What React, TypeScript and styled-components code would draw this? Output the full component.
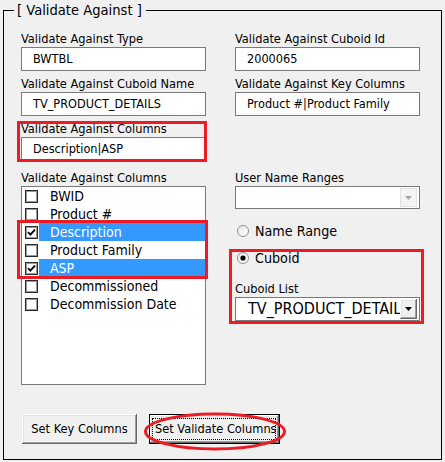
import React from 'react';
import styled, { createGlobalStyle } from 'styled-components';

const GlobalStyle = createGlobalStyle`
  html, body { margin: 0; padding: 0; background: #f0f0f0; }
  body {
    font-family: "DejaVu Sans Condensed", "DejaVu Sans", sans-serif;
    font-stretch: condensed;
    color: #000;
  }
`;

const Frame = styled.fieldset`
  box-sizing: border-box;
  width: 439px;
  height: 459px;
  margin: 1px 0 0 3px;
  padding: 0;
  border: 1px solid #000;
  min-width: 0;
`;

const Caption = styled.legend`
  margin-left: 10px;
  padding: 0 4px 0 3px;
  font-size: 14.6px;
  line-height: 18px;
`;

const Body = styled.div`
  padding: 7px 20px 0 17px;
`;

const Grid = styled.div<{ $gapTop?: number }>`
  display: grid;
  grid-template-columns: 185px 185px;
  column-gap: 29px;
  margin-top: ${(p) => p.$gapTop ?? 0}px;
  align-items: start;
`;

const Field = styled.div`
  position: relative;
  display: flex;
  flex-direction: column;
`;

const Label = styled.div<{ $top?: number }>`
  box-sizing: border-box;
  height: 21px;
  padding-top: 6px;
  margin-top: ${(p) => p.$top ?? 0}px;
  font-size: 12.7px;
  line-height: 14px;
  white-space: nowrap;
`;

const TextBox = styled.div`
  box-sizing: border-box;
  height: 24px;
  border: 1px solid #7a7a7a;
  background: #fff;
  padding-left: 11px;
  font-size: 12.6px;
  line-height: 22px;
  white-space: nowrap;
  overflow: hidden;
`;

const Mark = styled.span<{ $t: number; $l: number; $r: number; $b: number }>`
  position: absolute;
  top: ${(p) => p.$t}px;
  left: ${(p) => p.$l}px;
  right: ${(p) => p.$r}px;
  bottom: ${(p) => p.$b}px;
  border: 3px solid #ed1c24;
  pointer-events: none;
`;

const ListBox = styled.div`
  box-sizing: border-box;
  height: 199px;
  border: 1px solid #7a7a7a;
  background: #fff;
  display: flex;
  flex-direction: column;
`;

const ItemGroup = styled.div`
  position: relative;
  display: flex;
  flex-direction: column;
`;

const Item = styled.div`
  display: flex;
  align-items: center;
  height: 18px;
`;

const CheckBox = styled.span`
  box-sizing: border-box;
  width: 13px;
  height: 13px;
  margin-left: 3px;
  margin-right: 1px;
  border: 1px solid #2a2a2a;
  box-shadow: inset 0 0 0 1px #9a9a9a;
  background: #fff;
  display: flex;
  align-items: center;
  justify-content: center;
  flex: none;
`;

const ItemText = styled.span<{ $sel?: boolean }>`
  flex: 1;
  height: 18px;
  padding-left: 11px;
  font-size: 14px;
  line-height: 18px;
  white-space: nowrap;
  background: ${(p) => (p.$sel ? '#3399ff' : 'transparent')};
  color: ${(p) => (p.$sel ? '#fff' : '#000')};
`;

const Stack = styled.div`
  display: flex;
  flex-direction: column;
`;

const Combo = styled.div<{ $h: number }>`
  box-sizing: border-box;
  height: ${(p) => p.$h}px;
  border: 1px solid #7a7a7a;
  background: #fff;
  display: flex;
  align-items: stretch;
  padding: 1px;
`;

const ComboText = styled.span`
  flex: 1;
  overflow: hidden;
  white-space: nowrap;
  padding-left: 11px;
  font-size: 16px;
  line-height: 20px;
`;

const DropButton = styled.span<{ $disabled?: boolean }>`
  box-sizing: border-box;
  width: 17px;
  margin-right: 1px;
  flex: none;
  display: flex;
  align-items: center;
  justify-content: center;
  background: #f0f0f0;
  ${(p) =>
    p.$disabled
      ? 'border: 1px solid #e2e2e2; background: #f4f4f4;'
      : 'box-shadow: inset -1px -1px #696969, inset 1px 1px #fff, inset -2px -2px #a0a0a0, inset 2px 2px #e3e3e3;'}
`;

const RadioRow = styled.div<{ $top?: number }>`
  display: flex;
  align-items: center;
  height: 18px;
  margin-top: ${(p) => p.$top ?? 0}px;
  gap: 6px;
  padding-left: 2px;
  font-size: 14.2px;
  line-height: 18px;
`;

const Group = styled.div<{ $top?: number }>`
  position: relative;
  display: flex;
  flex-direction: column;
  margin-top: ${(p) => p.$top ?? 0}px;
`;

const ButtonRow = styled.div`
  display: flex;
  gap: 12px;
  margin-top: 29px;
  padding-left: 1px;
`;

const ButtonWrap = styled.div`
  position: relative;
`;

const Button = styled.div<{ $w: number; $default?: boolean }>`
  position: relative;
  box-sizing: border-box;
  width: ${(p) => p.$w}px;
  height: 30px;
  background: #f0f0f0;
  font-size: 12.7px;
  line-height: ${(p) => (p.$default ? 28 : 30)}px;
  white-space: nowrap;
  display: flex;
  justify-content: ${(p) => (p.$default ? 'flex-start' : 'center')};
  box-shadow: inset -1px -1px #696969, inset 1px 1px #fff, inset -2px -2px #a0a0a0, inset 2px 2px #e3e3e3;
  ${(p) => (p.$default ? 'border: 1px solid #000; padding: 0 3px 0 5px;' : '')}
`;

const ButtonLabel = styled.span`
  display: block;
  overflow: hidden;
  flex: 1;
`;

const Focus = styled.span`
  position: absolute;
  top: 3px;
  left: 2px;
  right: 3px;
  bottom: 3px;
  border: 1px dotted #000;
  pointer-events: none;
`;

const Ellipse = styled.svg`
  position: absolute;
  left: -5px;
  top: -3px;
  overflow: visible;
  pointer-events: none;
`;

const Check = () => (
  <svg width="9" height="9" viewBox="0 0 9 9">
    <path d="M1 4.2 L3.4 6.6 L8 1.6" fill="none" stroke="#000" strokeWidth="1.9" />
  </svg>
);

const Radio = ({ on }: { on?: boolean }) => (
  <svg width="12" height="12" viewBox="0 0 12 12">
    <defs>
      <linearGradient id={on ? 'rg1' : 'rg0'} x1="0" y1="0" x2="1" y2="1">
        <stop offset="0" stopColor="#e8e8e8" />
        <stop offset="1" stopColor="#ffffff" />
      </linearGradient>
    </defs>
    <circle cx="6" cy="6" r="5.5" fill={`url(#${on ? 'rg1' : 'rg0'})`} stroke="#8e8f8f" strokeWidth="1" />
    {on && <circle cx="6" cy="6" r="2.6" fill="#000" />}
  </svg>
);

const Arrow = ({ color }: { color: string }) => (
  <svg width="7" height="4" viewBox="0 0 7 4">
    <path d="M0 0 H7 L3.5 4 Z" fill={color} />
  </svg>
);

const items = [
  { name: 'BWID', checked: false },
  { name: 'Product #', checked: false },
  { name: 'Description', checked: true },
  { name: 'Product Family', checked: false },
  { name: 'ASP', checked: true },
  { name: 'Decommissioned', checked: false },
  { name: 'Decommission Date', checked: false },
];

const Row = ({ name, checked }: { name: string; checked: boolean }) => (
  <Item>
    <CheckBox>{checked && <Check />}</CheckBox>
    <ItemText $sel={checked}>{name}</ItemText>
  </Item>
);

export default function App() {
  return (
    <>
      <GlobalStyle />
      <Frame>
        <Caption>[ Validate Against ]</Caption>
        <Body>
          <Grid>
            <Field>
              <Label>Validate Against Type</Label>
              <TextBox>BWTBL</TextBox>
            </Field>
            <Field>
              <Label>Validate Against Cuboid Id</Label>
              <TextBox>2000065</TextBox>
            </Field>
            <Field>
              <Label>Validate Against Cuboid Name</Label>
              <TextBox>TV_PRODUCT_DETAILS</TextBox>
            </Field>
            <Field>
              <Label>Validate Against Key Columns</Label>
              <TextBox>Product #|Product Family</TextBox>
            </Field>
            <Field>
              <Label>Validate Against Columns</Label>
              <TextBox>Description|ASP</TextBox>
              <Mark $t={5} $l={-4} $r={-1} $b={-1} />
            </Field>
          </Grid>
          <Grid $gapTop={4}>
            <Field>
              <Label>Validate Against Columns</Label>
              <ListBox>
                {items.slice(0, 2).map((it) => (
                  <Row key={it.name} {...it} />
                ))}
                <ItemGroup>
                  {items.slice(2, 5).map((it) => (
                    <Row key={it.name} {...it} />
                  ))}
                  <Mark $t={-3} $l={-5} $r={-3} $b={-2} />
                </ItemGroup>
                {items.slice(5).map((it) => (
                  <Row key={it.name} {...it} />
                ))}
              </ListBox>
            </Field>
            <Stack>
              <Label>User Name Ranges</Label>
              <Combo $h={23}>
                <ComboText />
                <DropButton $disabled>
                  <Arrow color="#a6a6a6" />
                </DropButton>
              </Combo>
              <RadioRow $top={13}>
                <Radio />
                <span>Name Range</span>
              </RadioRow>
              <Group $top={9}>
                <RadioRow>
                  <Radio on />
                  <span>Cuboid</span>
                </RadioRow>
                <Label $top={9}>Cuboid List</Label>
                <Combo $h={24}>
                  <ComboText>TV_PRODUCT_DETAILS</ComboText>
                  <DropButton>
                    <Arrow color="#000" />
                  </DropButton>
                </Combo>
                <Mark $t={0} $l={-6} $r={-4} $b={-3} />
              </Group>
            </Stack>
          </Grid>
          <ButtonRow>
            <Button $w={115}>Set Key Columns</Button>
            <ButtonWrap>
              <Button $w={131} $default>
                <ButtonLabel>Set Validate Columns</ButtonLabel>
                <Focus />
              </Button>
              <Ellipse width="143" height="41" viewBox="0 0 143 41">
                <ellipse cx="71" cy="20.5" rx="69.5" ry="17.5" fill="none" stroke="#ed1c24" strokeWidth="3" />
              </Ellipse>
            </ButtonWrap>
          </ButtonRow>
        </Body>
      </Frame>
    </>
  );
}
